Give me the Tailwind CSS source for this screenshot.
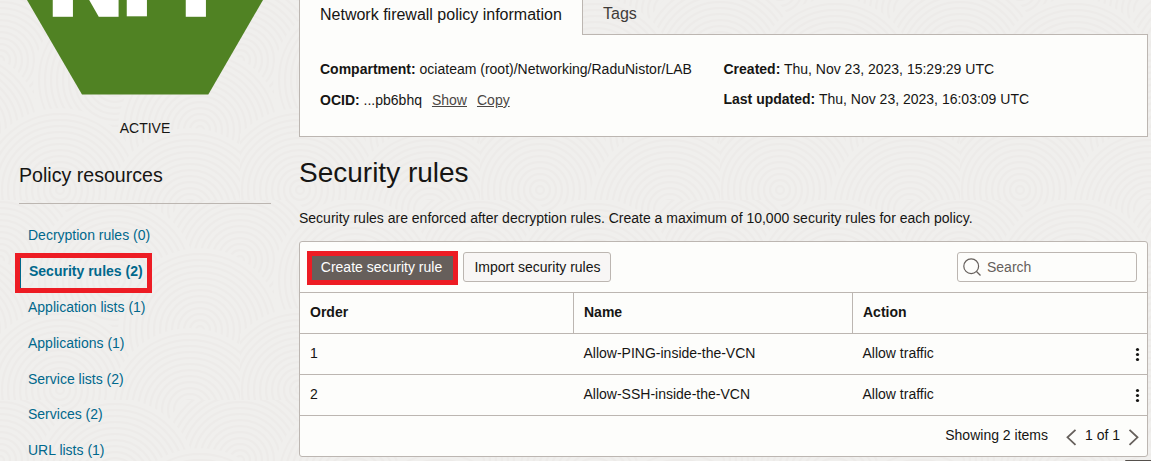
<!DOCTYPE html>
<html lang="en">
<head>
<meta charset="utf-8">
<title>Network firewall policy</title>
<script src="https://cdn.jsdelivr.net/npm/@tailwindcss/browser@4"></script>
</head>
<body class="bg-[#f0eeed] font-['Liberation_Sans',Arial,sans-serif] text-sm leading-5 text-[#161513]">
<div class="relative isolate flex h-[461px] w-[1151px] overflow-hidden">

  <!-- Textured page background -->
  <svg class="absolute inset-0 -z-10" width="1151" height="461" aria-hidden="true">
    <defs>
      <g id="rings" fill="none" stroke="#edebe9" stroke-width="2">
        <circle r="82" fill="#f0efed" stroke="none"/><circle r="76"/><circle r="70"/><circle r="64"/><circle r="58"/><circle r="52"/><circle r="46"/><circle r="40"/><circle r="34"/><circle r="28"/><circle r="22"/><circle r="16"/><circle r="10"/><circle r="4"/>
      </g>
      <pattern id="texture" width="240" height="200" patternUnits="userSpaceOnUse">
        <use href="#rings" x="60" y="-10"/><use href="#rings" x="190" y="10"/>
        <use href="#rings" x="0" y="60"/><use href="#rings" x="240" y="60"/>
        <use href="#rings" x="115" y="80"/>
        <use href="#rings" x="200" y="130"/><use href="#rings" x="-40" y="130"/>
        <use href="#rings" x="60" y="190"/><use href="#rings" x="190" y="210"/>
      </pattern>
    </defs>
    <rect width="1151" height="461" fill="url(#texture)"/>
  </svg>

  <!-- Sidebar -->
  <aside class="w-[299px] shrink-0">
    <svg class="block" width="290" height="96" viewBox="0 0 290 96">
      <path d="M27 0H263L208.300 94.500H82Z" fill="#508223"/>
      <text x="47.800 121.700 180.700" y="16.200" fill="#fff" stroke="#fff" stroke-width="1.600" font-family="Roboto" font-weight="900" font-size="108">NFP</text>
    </svg>
    <p class="mt-[22px] w-[290px] text-center">ACTIVE</p>
    <h2 class="mr-7 ml-[19px] mt-[23px] h-[43px] border-b border-[#bcb6b1] text-[19.600px] leading-7">Policy resources</h2>
    <nav class="mt-[13px] flex flex-col pl-[28px] text-[#00688c]">
      <a class="h-9 leading-9">Decryption rules (0)</a>
      <a class="relative h-9 pl-px font-bold leading-9"><span class="absolute -left-[13px] top-0 h-10 w-[137px] border-5 border-[#ed1c24]"><span class="block h-full w-px bg-[#00688c]"></span></span>Security rules (2)</a>
      <a class="h-9 leading-9">Application lists (1)</a>
      <a class="h-9 leading-9">Applications (1)</a>
      <a class="h-9 leading-9">Service lists (2)</a>
      <a class="h-9 leading-[35px]">Services (2)</a>
      <a class="h-9 leading-[35px]">URL lists (1)</a>
    </nav>
  </aside>

  <main class="w-[849px] shrink-0">
    <!-- Tabs -->
    <div class="flex h-[35px]">
      <div class="w-[284px] border-x border-[#bcb6b1] bg-[#fdfdfb] pl-5 text-base leading-[29px]">Network firewall policy information</div>
      <div class="flex-1 border-b border-[#bcb6b1] pl-5 text-base leading-[27px] text-[#3f3b38]">Tags</div>
    </div>
    <section class="flex h-[102px] border border-t-0 border-[#bcb6b1] bg-[#fdfdfb] pl-5 pt-6">
      <div class="flex w-[403.500px] flex-col gap-[11px]">
        <p><b>Compartment:</b> ociateam (root)/Networking/RaduNistor/LAB</p>
        <p><b>OCID:</b> ...pb6bhq<a class="ml-2.5 text-[#4b4744] underline">Show</a><a class="ml-2.5 text-[#4b4744] underline">Copy</a></p>
      </div>
      <div class="flex flex-col gap-2.5">
        <p><b>Created:</b> Thu, Nov 23, 2023, 15:29:29 UTC</p>
        <p><b>Last updated:</b> Thu, Nov 23, 2023, 16:03:09 UTC</p>
      </div>
    </section>

    <h1 class="mt-[18px] text-[28px] leading-9">Security rules</h1>
    <p class="mt-[17px]">Security rules are enforced after decryption rules. Create a maximum of 10,000 security rules for each policy.</p>

    <!-- Rules table -->
    <section class="mt-[13px] h-[216px] rounded-[3px] border border-[#bcb6b1] bg-[#fdfdfb]">
      <div class="flex h-[50px] items-start pl-[7px] pr-2.5 pt-[9px]">
        <button class="h-[34px] w-[151px] border-5 border-[#ed1c24] bg-[#665f5b] pb-0.5 pr-0.5 text-center leading-[22px] text-white">Create security rule</button>
        <button class="ml-[5px] mt-px h-[30px] w-[148px] rounded-[3px] border border-[#bcb6b1] bg-[#f8f6f5] pl-px text-center leading-7">Import security rules</button>
        <div class="ml-auto mt-px flex h-[30px] w-[180px] items-center gap-1.5 rounded-[3px] border border-[#bcb6b1] pl-[5px] text-[#66605c]">
          <svg width="18" height="18" viewBox="0 0 18 18" fill="none" stroke="#66605c" stroke-width="1.200"><circle cx="8.200" cy="8.200" r="7.400"/><path d="M13.500 13.500L17.500 17.500"/></svg>
          <span>Search</span>
        </div>
      </div>
      <div class="grid h-[42px] grid-cols-[273px_279px_1fr] border-y border-[#bcb6b1] font-bold leading-[38px]">
        <div class="pl-2.5">Order</div>
        <div class="border-l border-[#bcb6b1] pl-2.5">Name</div>
        <div class="border-l border-[#bcb6b1] pl-2.5">Action</div>
      </div>
      <div class="grid h-[41px] grid-cols-[273.500px_279px_1fr_20px] border-b border-[#bcb6b1] leading-[38px]">
        <div class="pl-2.5">1</div><div class="pl-2.5">Allow-PING-inside-the-VCN</div><div class="pl-2.5">Allow traffic</div>
        <svg width="20" height="40" fill="#161513"><circle cx="10.500" cy="15.500" r="1.600"/><circle cx="10.500" cy="20.500" r="1.600"/><circle cx="10.500" cy="25.500" r="1.600"/></svg>
      </div>
      <div class="grid h-[41px] grid-cols-[273.500px_279px_1fr_20px] border-b border-[#bcb6b1] leading-[38px]">
        <div class="pl-2.5">2</div><div class="pl-2.5">Allow-SSH-inside-the-VCN</div><div class="pl-2.5">Allow traffic</div>
        <svg width="20" height="40" fill="#161513"><circle cx="10.500" cy="15.500" r="1.600"/><circle cx="10.500" cy="20.500" r="1.600"/><circle cx="10.500" cy="25.500" r="1.600"/></svg>
      </div>
      <div class="flex h-10 justify-end pr-2 leading-[38px]">
        <span>Showing 2 items</span>
        <svg class="ml-[18px] mt-[13px]" width="11" height="17" fill="none" stroke="#66605c" stroke-width="1.800"><path d="M9.500 .8L1.500 8.300L9.500 15.800"/></svg>
        <span class="ml-2">1 of 1</span>
        <svg class="ml-2 mt-[13px]" width="11" height="17" fill="none" stroke="#66605c" stroke-width="1.800"><path d="M1.500 .8L9.500 8.300L1.500 15.800"/></svg>
      </div>
    </section>
  </main>
  <div class="absolute bottom-0 right-0 h-px w-[26px] rounded-tl-sm bg-[#55504c]"></div>
</div>
</body>
</html>
